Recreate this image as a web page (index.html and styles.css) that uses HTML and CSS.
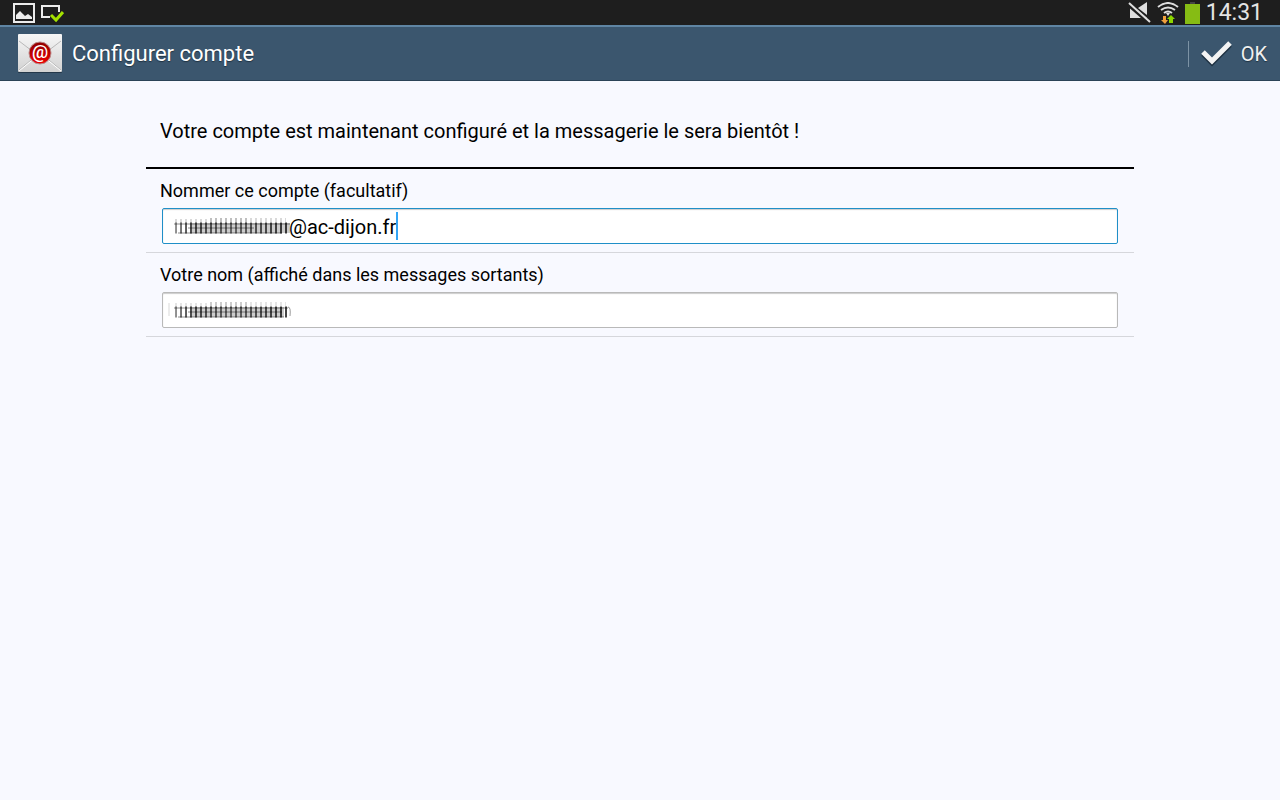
FILE: index.html
```
<!DOCTYPE html>
<html lang="fr">
<head>
    <meta charset="UTF-8">
    <meta name="viewport" content="width=device-width, initial-scale=1.0">
    <title>Configurer compte</title>
    <link rel="stylesheet" href="styles.css">
</head>
<body>

    <div class="status-bar">
        <div class="status-left">
            <svg width="22" height="20" viewBox="0 0 22 20">
                <rect x="1" y="1" width="20" height="18" fill="none" stroke="#ececec" stroke-width="2"/>
                <path d="M3 12l4-4 3 3 2 2 3-2 4 3v2H3z" fill="#ececec"/>
            </svg>
            <svg width="23" height="20" viewBox="0 0 23 20">
                <path d="M9 14H1V3h17v6" fill="none" stroke="#ececec" stroke-width="2"/>
                <path d="M10 12l5 5 7-8" fill="none" stroke="#a4e100" stroke-width="3"/>
            </svg>
        </div>
        <div class="status-right">
            <svg width="23" height="22" viewBox="0 0 23 22">
                <path d="M2 6h5l12 10v1L13 16H2z" fill="#dedede"/>
                <path d="M10 6l9-6v13z" fill="#dedede"/>
                <path d="M-1 2l21 18" stroke="#1e1e1e" stroke-width="3"/>
                <path d="M1 1l21 19" stroke="#dedede" stroke-width="2"/>
            </svg>
            <svg width="22" height="22" viewBox="0 0 22 22">
                <path d="M1 5q10-8 20 0M4 8q7-5 14 0M7 11q4-3 8 0" fill="none" stroke="#dedede" stroke-width="2"/>
                <path d="M9 11h4l-2 3z" fill="#dedede"/>
                <path d="M6 14h3v4h2l-3 4-4-4h2z" fill="#f0a03c"/>
                <path d="M12 21v-4h-2l4-4 4 4h-2v4z" fill="#8cd600"/>
            </svg>
            <svg width="15" height="22" viewBox="0 0 15 22">
                <path d="M0 2h15v20H0z" fill="#86bc14"/>
                <path d="M5 0h5v2H5z" fill="#444"/>
            </svg>
            <span class="clock">14:31</span>
        </div>
    </div>

    <header class="action-bar">
        <svg class="app-icon" width="46" height="40" viewBox="0 0 46 40">
            <defs>
                <linearGradient id="paper" x1="0" y1="0" x2="0" y2="1">
                    <stop offset="0" stop-color="#f6f6f6"/>
                    <stop offset="1" stop-color="#d2d2d2"/>
                </linearGradient>
                <linearGradient id="seal" x1="0" y1="0" x2="0" y2="1">
                    <stop offset="0" stop-color="#8e0000"/>
                    <stop offset="1" stop-color="#f00000"/>
                </linearGradient>
            </defs>
            <rect x="1" y="1" width="44" height="38" rx="1" fill="#24384a"/>
            <rect x="1" y="0" width="44" height="38" rx="1" fill="url(#paper)"/>
            <path d="M2 7l21 16L44 7M2 36l17-14M44 36L27 22" fill="none" stroke="#b9b9b9"/>
            <path d="M2 37l17-14M44 37L27 23" fill="none" stroke="#fff"/>
            <circle cx="23" cy="19" r="11" fill="url(#seal)" stroke="#b98a8a"/>
            <text class="at" x="23" y="24" text-anchor="middle">@</text>
        </svg>
        <h1>Configurer compte</h1>
        <button type="submit" form="accountForm" class="ok-button">
            <svg width="32" height="26" viewBox="0 0 32 26">
                <path d="M2 13l9 9L29 4" fill="none" stroke="#1f3242" stroke-width="5"/>
                <path d="M2 11l9 9L29 2" fill="none" stroke="#f4f4f4" stroke-width="5"/>
            </svg>
            OK
        </button>
    </header>

    <main>
        <p class="intro">Votre compte est maintenant configuré et la messagerie le sera bientôt !</p>

        <form id="accountForm">
            <div class="row">
                <label for="accountName">Nommer ce compte (facultatif)</label>
                <div class="field focused">
                    <input type="text" id="accountName" class="masked" value="@ac-dijon.fr">
                    <svg class="smudge" width="132" height="24" viewBox="0 0 132 24" aria-hidden="true">
                        <defs>
                            <linearGradient id="fade" gradientUnits="userSpaceOnUse" x1="8" y1="0" x2="126" y2="0">
                                <stop offset="0" stop-color="#000" stop-opacity="0.35"/>
                                <stop offset="0.15" stop-color="#000" stop-opacity="0.7"/>
                                <stop offset="0.5" stop-color="#000" stop-opacity="0.5"/>
                                <stop offset="1" stop-color="#000" stop-opacity="0.75"/>
                            </linearGradient>
                        </defs>
                        <path d="M11 12H126" stroke="url(#fade)" stroke-width="11" stroke-dasharray="2 3"/>
                        <path d="M10 8h116M24 12h66M14 17h104" stroke="#000" stroke-opacity="0.45"/>
                        <path d="M28 12h98" stroke="#000" stroke-opacity="0.2" stroke-width="10"/>
                        <path d="M11 5h34M86 4h36" stroke="#000" stroke-opacity="0.15" stroke-width="4" stroke-dasharray="2 3"/>
                        <path d="M46 5h40" stroke="#000" stroke-opacity="0.25" stroke-width="6" stroke-dasharray="2 3"/>
                    </svg>
                    <span class="caret"></span>
                </div>
            </div>
            <div class="row">
                <label for="userName">Votre nom (affiché dans les messages sortants)</label>
                <div class="field">
                    <input type="text" id="userName">
                    <svg class="smudge" width="132" height="24" viewBox="0 0 132 24" aria-hidden="true">
                        <path d="M5 3v13" stroke="#000" stroke-opacity="0.15"/>
                        <path d="M11 12H124" stroke="url(#fade)" stroke-width="11" stroke-dasharray="2 3"/>
                        <path d="M10 8h114M24 12h94M14 17h106" stroke="#000" stroke-opacity="0.45"/>
                        <path d="M28 12h92" stroke="#000" stroke-opacity="0.2" stroke-width="10"/>
                        <path d="M11 5h34M86 4h36" stroke="#000" stroke-opacity="0.1" stroke-width="4" stroke-dasharray="2 3"/>
                        <path d="M46 5h40" stroke="#000" stroke-opacity="0.2" stroke-width="6" stroke-dasharray="2 3"/>
                        <path d="M124 7q3 0 2 9" fill="none" stroke="#000" stroke-opacity="0.4"/>
                    </svg>
                </div>
            </div>
        </form>
    </main>

</body>
</html>
```
FILE: styles.css
```
* {
    box-sizing: border-box;
}

body {
    margin: 0;
    font-family: Roboto, "Liberation Sans", sans-serif;
    background-color: #f8f9ff;
    color: #000;
}

svg {
    display: block;
    flex: none;
}

.status-bar {
    display: flex;
    justify-content: space-between;
    height: 25px;
    padding: 0 17px 0 13px;
    background-color: #1e1e1e;
}

.status-left, .status-right {
    display: flex;
    align-items: center;
    gap: 6px;
}

.clock {
    font-size: 23px;
    line-height: 25px;
    color: #e4e4e4;
}

.action-bar {
    display: flex;
    align-items: center;
    height: 56px;
    padding: 0 13px 0 17px;
    background-color: #3b566e;
    border-top: 2px solid #5f85a3;
    border-bottom: 1px solid #2b4357;
    color: #fff;
    text-shadow: 0 1px 1px #1f3242;
}

h1 {
    flex: 1;
    margin: 0 0 0 9px;
    font-size: 22px;
    font-weight: 400;
}

.at {
    font-size: 18px;
    font-weight: 500;
    fill: #fff;
    text-shadow: none;
}

.ok-button {
    display: flex;
    align-items: center;
    gap: 8px;
    height: 26px;
    padding: 0 0 0 12px;
    border: none;
    border-left: 1px solid #7d93a5;
    background: none;
    color: #f0f0f0;
    font: inherit;
    font-size: 20px;
    text-shadow: inherit;
    cursor: pointer;
}

main {
    padding: 0 146px;
}

.intro {
    margin: 0;
    padding: 36px 14px 22px;
    border-bottom: 2px solid #000;
    font-size: 20px;
    line-height: 28px;
}

.row {
    padding: 10px 16px 8px;
    border-bottom: 1px solid #d6d7dc;
}

label {
    display: block;
    margin: 0 0 5px -2px;
    font-size: 18px;
    line-height: 24px;
}

.field {
    position: relative;
}

input {
    display: block;
    width: 100%;
    height: 36px;
    padding: 2px 12px 0;
    border: 1px solid #b9b9b9;
    border-radius: 2px;
    background-color: #fff;
    box-shadow: inset 0 1px 1px #ccc;
    color: #000;
    font: inherit;
    font-size: 20px;
    outline: none;
}

.focused input {
    border-color: #1f8fc8;
}

input.masked {
    padding-left: 126px;
}

/* blurred-out part of the value */
.smudge {
    position: absolute;
    top: 8px;
    left: 2px;
    filter: blur(0.5px);
    pointer-events: none;
}

.caret {
    position: absolute;
    top: 4px;
    left: 234px;
    width: 2px;
    height: 28px;
    background-color: #33a5f5;
}
```
